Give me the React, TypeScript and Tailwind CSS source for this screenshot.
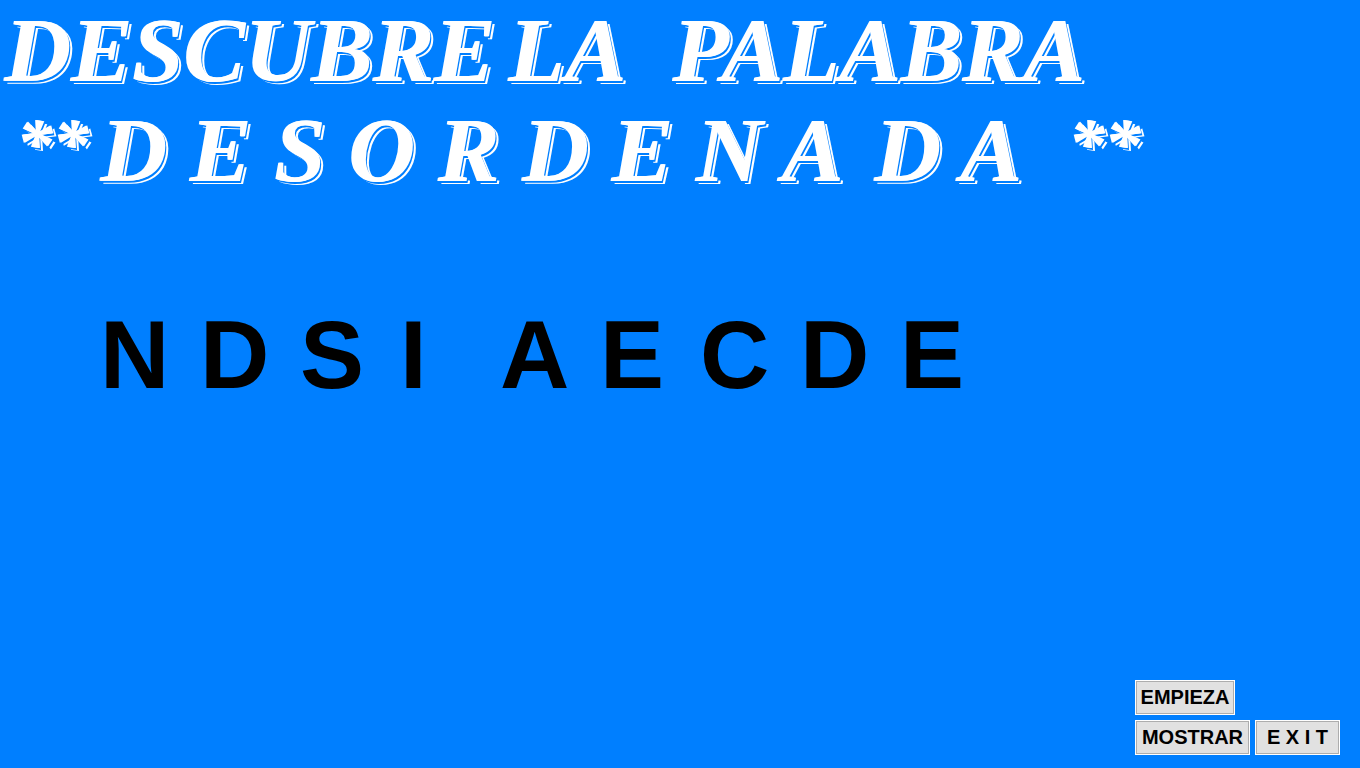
const letters = ["N", "D", "S", "I", "A", "E", "C", "D", "E"];

const shadow =
  "[text-shadow:1px_0_0_#ffffff,2px_2px_0_#007fff,4px_3px_0_#ffffff]";

const button =
  "h-[35px] border border-white bg-[#e1e1e1] pb-[2px] font-['Liberation_Sans',Arial,sans-serif] text-xl leading-6 font-bold whitespace-pre text-black outline outline-1 -outline-offset-2 outline-[#adadad]";

export default function App() {
  return (
    <main className="flex min-h-screen flex-col bg-[#007fff] font-['Liberation_Sans',Arial,sans-serif]">
      <h1
        className={`pl-1 font-['Liberation_Serif','Times_New_Roman',serif] text-[92px] leading-[100px] font-bold whitespace-pre text-white italic ${shadow}`}
      >
        <span className="flex">
          <span className="w-[504px]">DESCUBRE</span>
          <span className="w-[164px]">LA</span>
          <span>PALABRA</span>
        </span>
        <span className="flex items-start pl-3">
          <span className="w-[84px] text-[72px] leading-[88px]">**</span>
          <span className="w-[774px]">D E S O R D E N A</span>
          <span className="w-[194px]">D A</span>
          <span className="text-[72px] leading-[88px]">**</span>
        </span>
      </h1>
      <div className="mt-[100px] flex pl-[100px] text-[96px] leading-[110px] font-bold text-black">
        {letters.map((letter, i) => (
          <span key={i} className="w-[100px]">
            {letter}
          </span>
        ))}
      </div>
      <div className="mt-auto flex flex-col items-start gap-[5px] self-end pr-5 pb-[13px]">
        <button type="button" className={`w-[100px] ${button}`}>
          EMPIEZA
        </button>
        <div className="flex gap-[5px]">
          <button type="button" className={`w-[115px] ${button}`}>
            MOSTRAR
          </button>
          <button type="button" className={`w-[85px] ${button}`}>
            E X I T
          </button>
        </div>
      </div>
    </main>
  );
}
